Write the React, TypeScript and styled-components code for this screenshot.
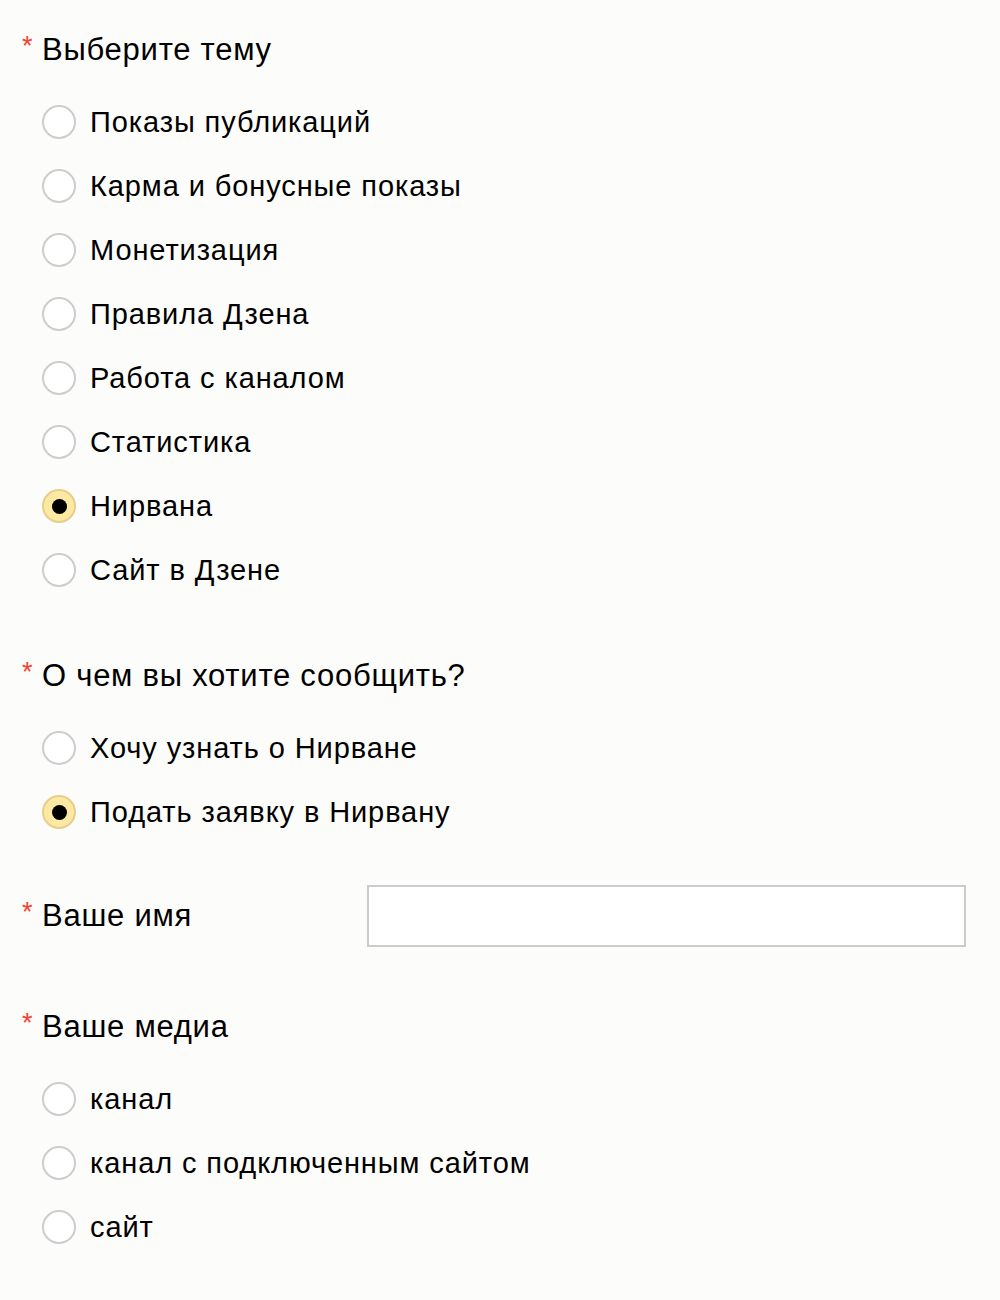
import React, { useState } from 'react';
import styled, { createGlobalStyle } from 'styled-components';

const GlobalStyle = createGlobalStyle`
	html, body {
		margin: 0;
		padding: 0;
		background: #fcfcfa;
	}
	body {
		font-family: 'Liberation Sans', Arial, sans-serif;
		color: #000;
	}
`;

const topics = [
	'Показы публикаций',
	'Карма и бонусные показы',
	'Монетизация',
	'Правила Дзена',
	'Работа с каналом',
	'Статистика',
	'Нирвана',
	'Сайт в Дзене',
];

const reasons = ['Хочу узнать о Нирване', 'Подать заявку в Нирвану'];

const media = ['канал', 'канал с подключенным сайтом', 'сайт'];

interface IRadioGroup {
	options: string[];
	value: string;
	onChange: (v: string) => void;
}

const RadioGroup = ({ options, value, onChange }: IRadioGroup) => {
	return (
		<List>
			{options.map((option) => (
				<Option key={option} onClick={() => onChange(option)}>
					<Circle checked={value === option} />
					<span>{option}</span>
				</Option>
			))}
		</List>
	);
};

const Title = ({ children }: { children: React.ReactNode }) => (
	<Heading>
		<Asterisk>*</Asterisk>
		<span>{children}</span>
	</Heading>
);

const App = () => {
	const [topic, setTopic] = useState('Нирвана');
	const [reason, setReason] = useState('Подать заявку в Нирвану');
	const [kind, setKind] = useState('');
	const [name, setName] = useState('');

	return (
		<Page>
			<GlobalStyle />
			<Section space={30}>
				<Title>Выберите тему</Title>
				<RadioGroup options={topics} value={topic} onChange={setTopic} />
			</Section>

			<Section space={54}>
				<Title>О чем вы хотите сообщить?</Title>
				<RadioGroup options={reasons} value={reason} onChange={setReason} />
			</Section>

			<FieldRow space={41}>
				<FieldLabel>
					<Title>Ваше имя</Title>
				</FieldLabel>
				<TextInput value={name} onChange={(e) => setName(e.target.value)} />
			</FieldRow>

			<Section space={60}>
				<Title>Ваше медиа</Title>
				<RadioGroup options={media} value={kind} onChange={setKind} />
			</Section>
		</Page>
	);
};

export default App;

const Page = styled.div`
	padding: 0 34px 40px 22px;
	min-height: 1300px;
	box-sizing: border-box;
`;

const Section = styled.section<{ space: number }>`
	margin-top: ${(p) => p.space}px;
`;

const Heading = styled.div`
	display: flex;
	align-items: flex-start;
	height: 40px;
	line-height: 40px;
	font-size: 31px;
	letter-spacing: 0.75px;
`;

const Asterisk = styled.span`
	width: 20px;
	flex-shrink: 0;
	color: #f4432f;
	font-size: 27px;
	line-height: 22px;
	letter-spacing: 0;
	margin-top: 5px;
`;

const List = styled.div`
	margin-top: 20px;
	padding-left: 20px;
`;

const Option = styled.label`
	display: flex;
	align-items: center;
	height: 64px;
	font-size: 29px;
	letter-spacing: 0.9px;
	cursor: pointer;
`;

const Circle = styled.span<{ checked: boolean }>`
	position: relative;
	width: 34px;
	height: 34px;
	margin-right: 14px;
	box-sizing: border-box;
	border-radius: 50%;
	border: 2px solid ${(p) => (p.checked ? '#e6cf8a' : '#cdcdcd')};
	background: ${(p) => (p.checked ? '#fde9a3' : '#fff')};
	flex-shrink: 0;

	&::after {
		content: '';
		display: ${(p) => (p.checked ? 'block' : 'none')};
		position: absolute;
		left: 50%;
		top: 50%;
		width: 15px;
		height: 15px;
		margin: -7.5px 0 0 -7.5px;
		border-radius: 50%;
		background: #000;
	}
`;

const FieldRow = styled.div<{ space: number }>`
	display: flex;
	align-items: center;
	margin-top: ${(p) => p.space}px;
`;

const FieldLabel = styled.div`
	width: 345px;
	flex-shrink: 0;
`;

const TextInput = styled.input`
	width: 599px;
	height: 62px;
	box-sizing: border-box;
	border: 2px solid #cbcbcb;
	background: #fff;
	font-family: inherit;
	font-size: 26px;
	padding: 0 14px;
	outline: none;
`;
